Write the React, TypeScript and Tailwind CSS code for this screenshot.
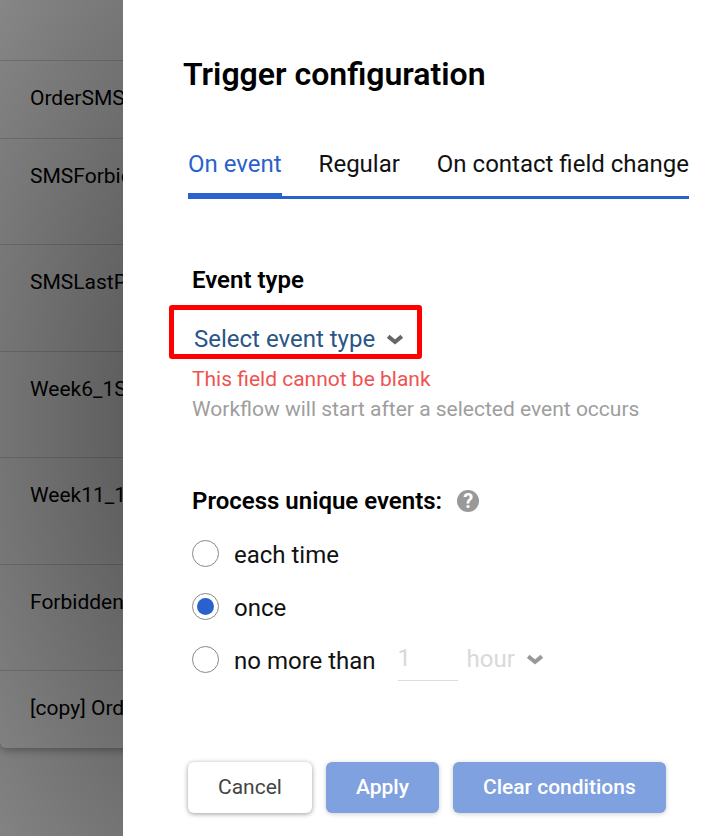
import { useState } from 'react';
import clsx from 'clsx';

type Frequency = 'each' | 'once' | 'limited';

const workflows = [
  { name: 'OrderSMS_1', tall: false },
  { name: 'SMSForbidden', tall: true },
  { name: 'SMSLastPush', tall: true },
  { name: 'Week6_1SMS', tall: true },
  { name: 'Week11_1SMS', tall: true },
  { name: 'Forbidden 2', tall: true },
  { name: '[copy] OrderSMS', tall: false },
];

const tabs = ['On event', 'Regular', 'On contact field change'];

const options: { value: Frequency; label: string }[] = [
  { value: 'each', label: 'each time' },
  { value: 'once', label: 'once' },
  { value: 'limited', label: 'no more than' },
];

function Chevron({ className }: { className: string }) {
  return (
    <svg className={clsx('pointer-events-none h-3 w-4', className)} viewBox="0 0 16 12" fill="none" aria-hidden="true">
      <path d="M1.2 3.4 L8 9 L14.8 3.4" stroke="currentColor" strokeWidth="4" />
    </svg>
  );
}

function WorkflowList() {
  return (
    <div className="col-start-1 row-start-1 min-w-0 bg-[#f8f8f8]">
      <table className="w-full table-fixed rounded-b-md bg-white text-[21px] leading-6 text-black shadow-[0_2px_8px_rgba(0,0,0,0.35)]">
        <thead>
          <tr>
            <th className="h-[60px]" aria-label="Workflow" />
          </tr>
        </thead>
        <tbody>
          {workflows.map((w) => (
            <tr key={w.name} className={w.tall ? 'h-[106px] odd:h-[107px]' : 'h-[78px]'}>
              <td className="border-t border-[#d8d8d8] pt-[25px] pl-[30px] align-top whitespace-nowrap">{w.name}</td>
            </tr>
          ))}
        </tbody>
      </table>
    </div>
  );
}

export default function App() {
  const [activeTab, setActiveTab] = useState(tabs[0]);
  const [frequency, setFrequency] = useState<Frequency>('once');

  return (
    <div className="grid min-h-screen overflow-hidden font-[Roboto,sans-serif]">
      <WorkflowList />

      {/* Drawer over the dimmed list */}
      <div className="z-10 col-start-1 row-start-1 flex min-w-0 bg-[radial-gradient(55%_77%_at_41%_50%,rgba(0,0,0,0.64)_40%,rgba(0,0,0,0.47)_100%)] pl-[123px]">
        <section
          role="dialog"
          aria-labelledby="trigger-title"
          className="min-w-0 flex-1 bg-white pt-[54px] pr-6 pb-[23px] pl-[65px] text-2xl leading-8 text-[#111]"
        >
          <h1 id="trigger-title" className="-ml-[5px] text-[32px] leading-10 font-semibold text-black">
            Trigger configuration
          </h1>

          <div role="tablist" className="mt-[50px] flex w-fit gap-[37px] border-b-[3px] border-[#2962cc] whitespace-nowrap">
            {tabs.map((tab) => (
              <button
                key={tab}
                role="tab"
                aria-selected={tab === activeTab}
                onClick={() => setActiveTab(tab)}
                className={clsx(
                  'border-b-[3px] pt-1 pb-[13px]',
                  tab === activeTab ? 'border-[#2962cc] text-[#2962cc]' : 'border-transparent',
                )}
              >
                {tab}
              </button>
            ))}
          </div>

          <div className="mt-[65px] pl-1">
            <label htmlFor="event-type" className="block font-semibold text-black">
              Event type
            </label>
            <div className="mt-[9px] -ml-[23px] flex h-[54px] w-[253px] items-center rounded-[3px] border-[5px] border-[#f00] pt-3.5 pl-5">
              <select
                id="event-type"
                defaultValue=""
                className="-mr-4 field-sizing-content appearance-none bg-transparent pr-7 text-[#2a5587] outline-none"
              >
                <option value="">Select event type</option>
              </select>
              <Chevron className="text-[#666]" />
            </div>
            <p className="mt-[5px] text-[21px] leading-[30px] text-[#ef5350]">This field cannot be blank</p>
            <p className="text-[21px] leading-[30px] text-[#9e9e9e]">Workflow will start after a selected event occurs</p>
          </div>

          <div role="radiogroup" aria-labelledby="unique-events" className="mt-[61px] pl-1">
            <div className="flex items-center gap-[15px] font-semibold text-black">
              <span id="unique-events">Process unique events:</span>
              <button
                aria-label="Help"
                className="flex size-[22px] items-center justify-center rounded-full bg-[#999] text-xl leading-5 font-bold text-white"
              >
                ?
              </button>
            </div>
            <div className="mt-[10px]">
              {options.map((o) => (
                <div key={o.value} className="flex h-[53px] items-center">
                  <label className="flex items-center gap-[15px] whitespace-nowrap">
                    <input
                      type="radio"
                      name="frequency"
                      checked={frequency === o.value}
                      onChange={() => setFrequency(o.value)}
                      className="size-[27px] appearance-none rounded-full border border-[#888] p-1 checked:bg-[#2962cc] checked:bg-clip-content"
                    />
                    <span className="pt-0.5">{o.label}</span>
                  </label>
                  {o.value === 'limited' && (
                    <div className="flex items-center pb-0.5">
                      <input
                        aria-label="Number of events"
                        defaultValue="1"
                        disabled
                        className="ml-[22px] h-11 w-[60px] border-b border-[#ddd] bg-transparent text-[#d9d9d9]"
                      />
                      <select
                        aria-label="Period"
                        disabled
                        className="-mr-4 ml-[9px] field-sizing-content appearance-none bg-transparent pr-7 text-[#d9d9d9] opacity-100"
                      >
                        <option>hour</option>
                      </select>
                      <Chevron className="text-[#999]" />
                    </div>
                  )}
                </div>
              ))}
            </div>
          </div>

          <div className="mt-[76px] flex gap-[14px] text-[21px] whitespace-nowrap">
            <button className="h-[51px] rounded-md bg-white px-[30px] pb-0.5 text-[#444] shadow-[0_1px_5px_rgba(0,0,0,0.4)]">
              Cancel
            </button>
            <button disabled className="h-[51px] rounded-md bg-[#80a1e0] px-[30px] pb-0.5 font-medium text-white shadow-[0_1px_5px_rgba(0,0,0,0.2)]">
              Apply
            </button>
            <button disabled className="h-[51px] rounded-md bg-[#80a1e0] px-[30px] pb-0.5 font-medium text-white shadow-[0_1px_5px_rgba(0,0,0,0.2)]">
              Clear conditions
            </button>
          </div>
        </section>
      </div>
    </div>
  );
}
